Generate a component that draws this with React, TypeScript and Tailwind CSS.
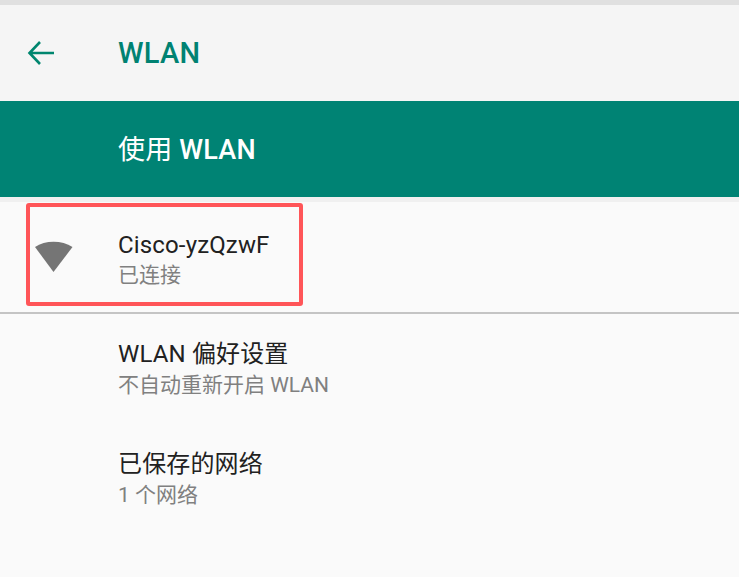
const font = "font-['Roboto','Noto_Sans_CJK_SC',sans-serif]"

function Row({ title, sub }: { title: string; sub: string }) {
  return (
    <div className="h-[110px] pl-[118px] pt-[24px]">
      <div className="text-[24px] leading-[32px] tracking-[0.15px] text-[#212121]">{title}</div>
      <div className="text-[21px] leading-[30px] text-[#808080]">{sub}</div>
    </div>
  )
}

export default function App() {
  return (
    <div className={`${font} w-[739px] h-[577px] overflow-hidden bg-[#fafafa]`}>
      <div className="h-[5px] bg-[#e0e0e0]" />
      <div className="h-[96px] bg-[#f5f5f5] flex items-center">
        <div className="w-[118px] pl-[26px]">
          <svg width="30" height="30" viewBox="0 0 30 30" fill="none" stroke="#00866f" strokeWidth="2.6">
            <path d="M28 15H4M14 4L3.5 15 14 26" />
          </svg>
        </div>
        <div className="pt-[2px] text-[29px] font-medium tracking-[0.3px] text-[#008272]">WLAN</div>
      </div>
      <div className="h-[96px] bg-[#008374] flex items-center pl-[118px] pt-[2px] text-[27px] tracking-[0.2px] text-white">
        <span>使用 <span className="font-medium">WLAN</span></span>
      </div>
      <div className="h-[5px] bg-[#f0f0f0]" />
      <div className="relative h-[112px] border-b-2 border-[#c4c4c4] pl-[118px] pt-[27px]">
        <div className="absolute left-[26px] top-[1px] w-[277px] h-[103px] border-[4px] border-[#ff5558] rounded-[3px]" />
        <svg className="absolute left-[34px] top-[39px]" width="40" height="32" viewBox="0 0 40 32" fill="#757575">
          <path d="M1 6C11-1 28-1 38.5 6L19.5 31Z" />
        </svg>
        <div className="text-[24px] leading-[32px] tracking-[0.15px] text-[#212121]">Cisco-yzQzwF</div>
        <div className="text-[21px] leading-[28px] text-[#808080]">已连接</div>
      </div>
      <Row title="WLAN 偏好设置" sub="不自动重新开启 WLAN" />
      <Row title="已保存的网络" sub="1 个网络" />
    </div>
  )
}
